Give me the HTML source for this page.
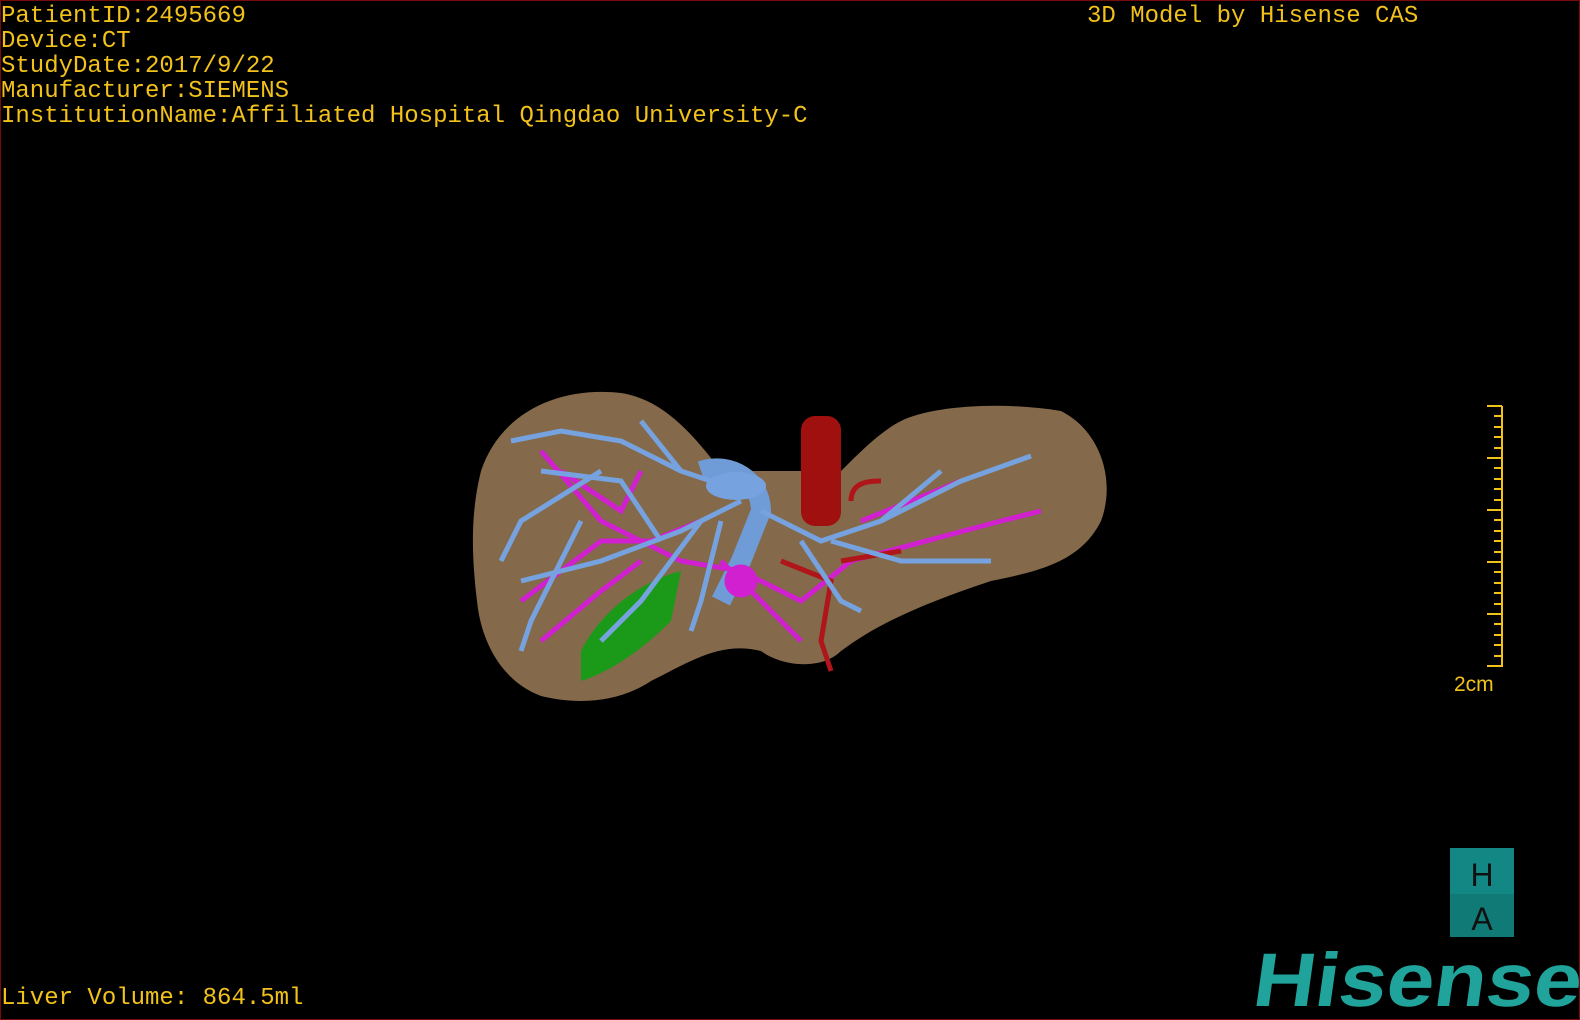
<!DOCTYPE html>
<html><head><meta charset="utf-8"><style>
html,body{margin:0;padding:0;background:#000;}
#c{position:relative;width:1580px;height:1020px;background:#000;overflow:hidden;box-sizing:border-box;border:1px solid #7a0b0b;}
.t{position:absolute;font-family:"Liberation Mono",monospace;font-size:24px;color:#f2c21a;white-space:pre;line-height:25px;}
</style></head><body><div id="c">
<div class="t" style="left:0;top:3px">PatientID:2495669
Device:CT
StudyDate:2017/9/22
Manufacturer:SIEMENS
InstitutionName:Affiliated Hospital Qingdao University-C</div>
<div class="t" style="left:1086px;top:3px">3D Model by Hisense CAS</div>
<div class="t" style="left:0;top:985px">Liver Volume: 864.5ml</div>

<svg width="1580" height="1020" style="position:absolute;left:0;top:0">
<path d="M480,470 C500,410 560,385 620,392 C660,398 690,430 720,470 L840,470 C860,450 880,430 900,420 C930,405 1000,400 1060,410 C1100,430 1115,480 1100,520 C1080,560 1040,570 990,580 C930,600 880,620 840,650 C820,670 780,665 760,650 C720,640 690,660 650,680 C620,700 580,705 540,695 C500,680 480,640 476,600 C470,550 470,510 480,470 Z" fill="#84694a"/>
<path d="M700,470 C730,460 760,480 760,510 L740,560 L720,600" stroke="#6f9bd6" stroke-width="20" fill="none"/>
<rect x="800" y="415" width="40" height="110" rx="14" fill="#a0100e"/>
<path d="M580,650 C600,610 640,580 680,570 L670,620 C640,650 610,670 580,680 Z" fill="#1a9a18"/>
<g stroke="#d020d0" stroke-width="5" fill="none">
<path d="M540,450 L600,520 L680,560 L740,570 L800,600 L850,560 L1000,520 L1040,510"/>
<path d="M520,600 L600,540 L650,540 L700,520"/>
<path d="M540,640 L600,590 L640,560"/>
<path d="M560,470 L620,510 L640,470"/>
<path d="M720,560 L760,600 L800,640"/>
<path d="M860,520 L960,480"/>
<circle cx="740" cy="580" r="14" fill="#d020d0"/>
</g>
<g stroke="#b0151a" stroke-width="5" fill="none">
<path d="M780,560 L830,580 L820,640 L830,670"/>
<path d="M840,560 L900,550"/>
<path d="M850,500 C850,480 870,480 880,480"/>
</g>
<g stroke="#76a3df" stroke-width="5" fill="none">
<path d="M740,490 L680,470 L620,440 L560,430 L510,440"/>
<path d="M680,470 L640,420"/>
<path d="M740,500 L680,530 L600,560 L520,580"/>
<path d="M700,520 L640,600 L600,640"/>
<path d="M660,540 L620,480 L540,470"/>
<path d="M760,510 L820,540 L880,520 L960,480 L1030,455"/>
<path d="M830,540 L900,560 L990,560"/>
<path d="M800,540 L840,600 L860,610"/>
<path d="M880,520 L940,470"/>
<path d="M720,520 L700,600 L690,630"/>
<path d="M600,470 L520,520 L500,560"/>
<path d="M580,520 L530,620 L520,650"/>
</g>
<ellipse cx="735" cy="485" rx="30" ry="14" fill="#76a3df"/>
<g stroke="#f2c21a" stroke-width="2">
<line x1="1501" y1="405" x2="1501" y2="666"/>
<line x1="1486" y1="405" x2="1501" y2="405"/>
<line x1="1486" y1="457" x2="1501" y2="457"/>
<line x1="1486" y1="509" x2="1501" y2="509"/>
<line x1="1486" y1="561" x2="1501" y2="561"/>
<line x1="1486" y1="613" x2="1501" y2="613"/>
<line x1="1486" y1="665" x2="1501" y2="665"/>
<path d="M1493,415H1501M1493,426H1501M1493,436H1501M1493,447H1501M1493,467H1501M1493,478H1501M1493,488H1501M1493,499H1501M1493,519H1501M1493,530H1501M1493,540H1501M1493,551H1501M1493,571H1501M1493,582H1501M1493,592H1501M1493,603H1501M1493,623H1501M1493,634H1501M1493,644H1501M1493,655H1501"/>
</g>
<text x="1453" y="690" font-family="Liberation Sans,sans-serif" font-size="21" fill="#f2c21a">2cm</text>
<rect x="1449" y="847" width="64" height="46" fill="#138784"/>
<rect x="1449" y="893" width="64" height="43" fill="#107a77"/>
<text x="1481" y="885" text-anchor="middle" font-family="Liberation Sans,sans-serif" font-size="32" fill="#111">H</text>
<text x="1481" y="929" text-anchor="middle" font-family="Liberation Sans,sans-serif" font-size="32" fill="#111">A</text>
<text x="1250" y="1005" font-family="Liberation Sans,sans-serif" font-weight="bold" font-size="76" fill="#1fa39a" textLength="328" lengthAdjust="spacingAndGlyphs" transform="skewX(-8) translate(141,0)">Hisense</text>
</svg>
</div></body></html>
